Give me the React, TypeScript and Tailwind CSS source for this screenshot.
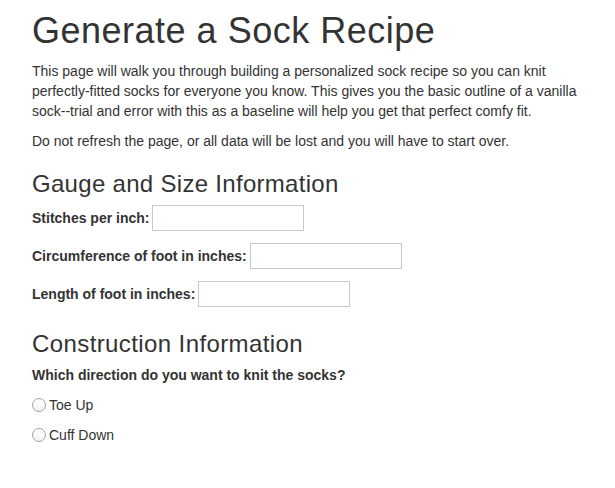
export default function App() {
  const fields = ['Stitches per inch:', 'Circumference of foot in inches:', 'Length of foot in inches:']
  const options = ['Toe Up', 'Cuff Down']

  return (
    <div className="min-h-screen bg-white pl-[32px] pr-[15px] pt-[11px] text-[14px] leading-[20px] text-[#333] font-['Liberation_Sans',Arial,sans-serif]">
      <h1 className="mb-[10px] text-[36px] leading-[39.6px] tracking-[0.5px]">Generate a Sock Recipe</h1>
      <p className="mb-[10px]">
        This page will walk you through building a personalized sock recipe so you can knit perfectly-fitted socks
        for everyone you know. This gives you the basic outline of a vanilla sock--trial and error with this as a
        baseline will help you get that perfect comfy fit.
      </p>
      <p className="mb-[10px]">Do not refresh the page, or all data will be lost and you will have to start over.</p>

      {/* Gauge */}
      <h3 className="mt-[20px] mb-[8px] text-[24px] leading-[26.4px] tracking-[0.3px]">Gauge and Size Information</h3>
      <div className="flex flex-col gap-[12px]">
        {fields.map(f => (
          <div key={f} className="flex h-[26px] items-center gap-[3px]">
            <label className="font-bold">{f}</label>
            <input type="text" className="h-[26px] w-[152px] border border-[#c8c8c8] bg-white px-[4px] outline-none" />
          </div>
        ))}
      </div>

      {/* Construction */}
      <h3 className="mt-[24px] mb-[8px] text-[24px] leading-[26.4px] tracking-[0.4px]">Construction Information</h3>
      <p className="font-bold">Which direction do you want to knit the socks?</p>
      <div className="mt-[10px] flex flex-col gap-[10px]">
        {options.map(o => (
          <label key={o} className="flex h-[20px] items-center gap-[3px]">
            <input
              type="radio"
              name="direction"
              className="m-0 h-[14px] w-[14px] appearance-none rounded-full border border-[#a3a3a3] bg-gradient-to-b from-white to-[#f3f3f3]"
            />
            <span>{o}</span>
          </label>
        ))}
      </div>
    </div>
  )
}
